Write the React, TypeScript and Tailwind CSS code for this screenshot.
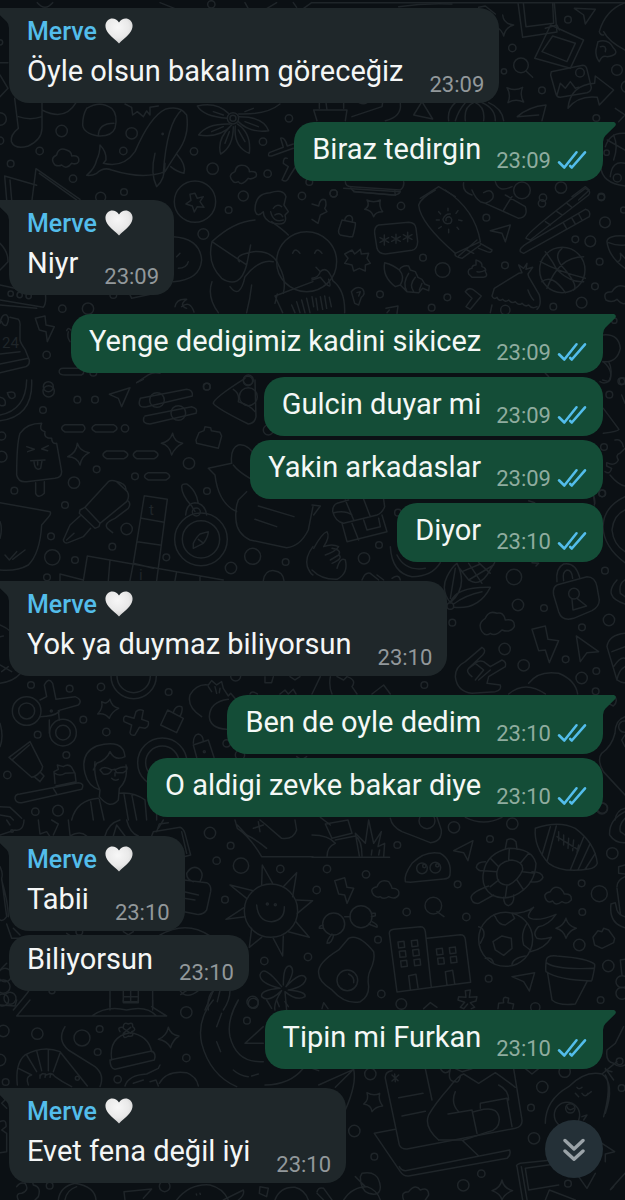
import { useId } from 'react'

type Message = { text: string; time: string }
type Group = { from: 'me' | 'Merve'; messages: Message[] }

const groups: Group[] = [
  { from: 'Merve', messages: [{ text: 'Öyle olsun bakalım göreceğiz', time: '23:09' }] },
  { from: 'me', messages: [{ text: 'Biraz tedirgin', time: '23:09' }] },
  { from: 'Merve', messages: [{ text: 'Niyr', time: '23:09' }] },
  {
    from: 'me',
    messages: [
      { text: 'Yenge dedigimiz kadini sikicez', time: '23:09' },
      { text: 'Gulcin duyar mi', time: '23:09' },
      { text: 'Yakin arkadaslar', time: '23:09' },
      { text: 'Diyor', time: '23:10' },
    ],
  },
  { from: 'Merve', messages: [{ text: 'Yok ya duymaz biliyorsun', time: '23:10' }] },
  {
    from: 'me',
    messages: [
      { text: 'Ben de oyle dedim', time: '23:10' },
      { text: 'O aldigi zevke bakar diye', time: '23:10' },
    ],
  },
  {
    from: 'Merve',
    messages: [
      { text: 'Tabii', time: '23:10' },
      { text: 'Biliyorsun', time: '23:10' },
    ],
  },
  { from: 'me', messages: [{ text: 'Tipin mi Furkan', time: '23:10' }] },
  { from: 'Merve', messages: [{ text: 'Evet fena değil iyi', time: '23:10' }] },
]

type Tile = { x: number; y: number; dots: number[][]; paths: string[] }

// Doodles are drawn at 3x and scaled down; dots are [cx, cy, r].
const tiles: Tile[] = [
  {
    x: 0,
    y: 0,
    dots: [
      [185, 393, 17], [395, 400, 17], [119, 453, 11], [370, 453, 11], [32, 491, 10], [219, 536, 11],
      [582, 454, 11], [638, 506, 17], [789, 425, 11], [803, 521, 11], [372, 576, 10], [867, 355, 11],
      [0, 357, 19], [0, 422, 11], [0, 127, 8], [634, 13, 11], [488, 402, 2], [302, 592, 15], [730, 588, 15], [906, 588, 11],
      [699, 355, 17], [699, 355, 9], [585, 605, 62], [928, 546, 10],
    ],
    paths: [
      'M112 8Q135 35 158 8M480 8L525 26M735 8L745 26M800 26L830 8M880 8L890 22M910 26L935 8',
      'M0 188H24M0 225L24 265L0 290',
      'M44 295L55 385Q30 405 34 425Q45 450 85 438Q125 420 126 385V305M55 350Q90 362 126 350M126 330Q195 365 228 308',
      'M260 325Q300 300 335 325Q355 345 345 385Q335 410 295 408Q250 400 248 375Q248 345 260 325M295 408Q295 370 342 370',
      'M375 312L395 322L398 345L412 335L430 350L440 333L450 345L450 322L475 318',
      'M310 490Q370 505 405 455Q450 350 495 328Q540 315 560 345Q570 410 530 460Q510 490 495 515Q430 540 335 510Q310 500 290 520Q275 528 260 526Q285 505 290 480Q300 460 300 435Q320 455 318 480Q310 490 310 490M545 330Q500 370 490 520M465 460Q450 520 470 560Q495 540 495 490M530 462Q560 495 552 520Q530 515 512 500',
      'M165 495Q148 475 170 465Q175 440 200 450Q215 455 215 468Q240 465 236 485Q230 495 215 490Q200 510 185 495Q175 500 165 495',
      'M700 545Q680 525 705 515Q710 490 735 497Q750 505 748 515Q775 512 768 530Q755 540 745 535Q725 560 715 545Q705 550 700 545',
      'M685 340Q650 305 592 318Q610 350 682 355M690 372Q620 370 596 405Q660 415 695 375M690 380Q650 420 662 462Q700 440 700 380M706 378Q700 440 748 460Q755 400 712 372M715 365Q750 400 806 392Q790 350 718 350M716 342Q800 345 840 312M640 335L670 345M635 395L670 380M675 430L688 395M735 425L715 390M775 380L735 365M760 325L735 335',
      'M808 458Q800 470 815 468L880 445M808 458L850 442L842 415Q855 410 862 438L880 432M862 475Q850 470 850 490L865 500L846 540Q860 550 868 530L890 495',
      'M14 528L110 556M14 528L20 600M30 540L35 600M108 506L96 600M108 506L240 598M118 520L230 600',
      'M585 580L592 595L610 590L600 605L612 622L592 620L583 636L577 618L558 612L573 601L570 583Z',
    ],
  },
  {
    x: 312,
    y: 0,
    dots: [
      [768, 59, 10], [601, 144, 11], [576, 214, 8], [627, 196, 22], [690, 271, 10], [915, 210, 16], [853, 354, 10],
      [804, 218, 13], [65, 580, 11], [690, 610, 11], [747, 563, 17], [868, 592, 10], [630, 571, 25], [884, 458, 8], [916, 534, 12], [945, 260, 17],
    ],
    paths: [
      'M0 8H939',
      'M260 20Q340 8 420 12M500 22L520 18L550 42',
      'M572 45Q575 72 605 75Q580 82 575 108Q570 90 555 82',
      'M618 8L632 112L735 96L727 8M634 8L642 80L725 70L722 8',
      'M716 75L815 120L775 205L668 175ZM722 108L790 130L765 185L690 155ZM700 85L735 75L742 90',
      'M787 25L850 28L820 72L815 45ZM862 95Q880 30 939 8M875 95Q890 125 939 150M862 95Q865 105 875 105',
      'M858 125Q890 115 905 145Q925 165 885 170Q870 165 862 185Q850 170 852 150ZM865 140Q885 135 880 155',
      'M642 213L662 232',
      'M718 215L812 196Q822 196 825 208L838 262Q838 275 825 278L745 292Q735 292 732 282L716 225ZM735 285L745 250L760 265L775 245L790 265L800 262',
      'M768 325Q775 255 848 250L850 228L905 270L862 315L856 292Q800 285 768 325',
      'M585 263Q610 275 632 262Q622 285 635 306Q610 295 588 308Q598 285 585 263Z',
      'M5 330H105L100 362M15 362L5 330M22 308V325M42 308L45 330M95 308L95 325M120 350L210 320L212 308M265 310Q270 350 220 362M305 345L330 305L362 357ZM130 300Q150 318 165 308',
      'M410 362Q405 330 430 308M430 362Q440 330 460 308M460 362Q455 320 485 308M490 308Q520 320 515 362M510 308Q550 325 550 362M530 308Q570 325 575 362M616 350Q650 320 702 315L690 362M616 350L680 345M910 325L939 345L920 365',
      'M100 545Q100 560 120 560L265 570Q278 560 275 545M115 560Q120 575 135 575L250 586L248 570M325 595L380 560L430 590M455 548Q450 575 480 585M550 545Q560 580 600 560',
      'M880 440Q895 395 939 400M866 500Q870 550 939 558M886 420L939 450M895 530Q900 480 939 490M905 405Q920 440 905 480',
      'M780 590L820 560L832 570L800 600',
    ],
  },
  {
    x: 0,
    y: 190,
    dots: [
      [686, 60, 10], [610, 132, 16], [187, 356, 11], [264, 356, 17], [140, 495, 11], [32, 311, 8], [59, 315, 8], [86, 318, 8],
      [340, 315, 10], [744, 573, 14], [620, 590, 10], [280, 548, 10], [145, 590, 15], [920, 215, 90],
    ],
    paths: [
      'M765 60Q765 10 810 8Q850 -5 858 20L852 45L865 65L855 75Q865 110 820 100Q790 90 790 65Q770 85 765 60M820 55Q830 40 845 50M812 65Q820 100 850 90M825 75Q840 65 848 80',
      'M765 90Q700 95 636 155L740 225M815 95Q850 120 865 135M636 155Q620 220 665 265Q720 300 740 225L752 165M718 215Q700 195 760 185Q820 180 838 230Q860 270 850 310M636 275Q620 320 655 368M690 290Q720 330 735 260Q780 205 820 215M755 285Q750 330 740 368',
      'M825 318L939 275M825 318L848 368M832 312L825 340M875 345L885 368M890 335L900 368M905 330L915 368M920 325L930 368M878 190Q885 170 900 190',
      'M520 140Q600 145 605 210Q600 270 520 275M530 200L540 190M535 235Q560 235 565 215M525 350Q530 325 560 328Q535 345 560 355M545 350Q570 330 582 366M388 310L395 325L455 312',
      'M0 160Q25 185 24 215Q10 230 0 240M0 285L45 295M0 330L130 352Q140 340 136 310M0 345L110 355',
      'M0 400Q5 370 20 375Q30 385 20 405Q10 410 5 395M30 382L55 388Q62 395 60 410V450Q62 460 75 478L88 510Q90 530 70 532L0 548M0 492L60 485M0 522L85 505',
      'M106 385L135 378L138 405L163 410L142 455L138 425L118 420Z',
      'M200 422Q205 410 212 420M205 425Q200 440 210 455M178 548Q175 535 190 535H240Q260 545 245 555H195Q180 555 178 548M410 578L445 555Q460 545 480 550',
    ],
  },
  {
    x: 312,
    y: 190,
    dots: [
      [65, 10, 11], [267, 48, 11], [333, 203, 10], [392, 240, 22], [523, 83, 10], [406, 322, 10], [204, 313, 10],
      [359, 353, 10], [579, 226, 10], [693, 23, 11], [868, 20, 10], [879, 97, 16], [790, 148, 10], [835, 154, 16],
      [863, 215, 10], [849, 289, 10], [809, 338, 16], [724, 350, 10], [932, 573, 10], [907, 392, 8], [751, 240, 68], [580, 360, 14], [935, 60, 9],
    ],
    paths: [
      'M0 265Q20 262 25 245L12 232M25 245Q45 225 62 270M0 270L25 262L40 280Q62 300 50 268M8 190Q15 170 30 190M62 272Q100 300 98 368M0 320L5 350M12 325L17 360M25 320L32 358M38 318L44 355M52 322L58 350',
      'M95 -5L265 5Q260 15 245 15L125 5M0 42L20 48Q25 22 40 30Q45 45 38 55L45 65L25 75L18 100L0 88M165 30Q185 40 205 30Q200 50 212 65Q190 65 185 80Q178 60 158 58Q175 48 165 30',
      'M90 90L130 98Q132 105 122 140Q115 142 85 135Q78 130 80 120ZM98 92Q100 75 115 77Q125 82 120 97',
      'M200 105L290 97Q310 98 312 115L317 155Q316 178 300 181L220 192Q200 192 195 175L188 130Q186 110 200 105Z',
      'M217 135V165M204 143L230 157M230 143L204 157M252 133V160M239 140L265 154M265 140L239 154M287 127V155M274 134L300 148M300 134L274 148',
      'M370 0Q325 25 320 45Q325 100 430 190L505 155Q490 60 400 0M430 190Q425 200 450 205L505 165M440 198L495 150M465 180L485 190M505 160L540 180Q540 190 525 185L500 175',
      'M402 92Q400 80 412 80Q425 88 415 100Q395 105 393 88Q400 70 415 72M408 55V62M380 65L386 72M438 62L432 70M373 90H382M440 90L450 92M380 115L388 110M410 118V128M435 112L440 118',
      'M480 0Q490 25 505 35L520 40Q550 30 542 10Q535 -5 515 8M520 40L620 85Q650 80 640 50L580 15M575 60Q590 35 600 20M535 122L595 105L580 155L570 130Z',
      'M642 145Q640 130 820 -5Q840 5 830 15L655 150ZM625 185Q620 175 645 160L820 58Q838 62 832 80L635 190ZM700 95L715 105M735 65L750 75M765 40L780 52M755 100L765 118M780 85L790 102M800 72L810 90',
      'M120 180L128 192L145 178L148 192L170 190L165 205L175 220L160 225L160 243L142 235L125 243L120 225L98 220L108 205L98 192Z',
      'M218 218Q210 260 250 290L265 285L285 305L320 308L332 295L350 302L352 288L338 282L330 268L318 262L310 245L295 240L290 228Q270 225 262 240Q245 225 218 218M262 240Q280 260 265 285M290 250Q270 280 285 305M310 262Q290 285 305 305M330 280L322 300',
      'M470 252Q465 238 480 235Q480 225 492 225V210Q512 215 510 230Q525 235 520 245Q530 260 515 262H480ZM495 245Q510 248 520 240',
      'M118 305Q135 285 152 297Q162 312 148 322L140 345L128 340ZM135 308L145 305L140 318M460 305Q470 290 485 300L508 318L475 358L462 350L480 325ZM222 355L258 348L255 370M225 368L232 360',
      'M540 318L547 295L620 250L630 248L620 225L635 235L645 220L642 238L662 232L648 252L650 260L682 315Q690 345 675 358M540 318Q545 330 555 322Q560 335 572 328Q580 338 590 330Q600 342 610 335Q620 348 630 340Q640 352 650 345Q660 358 675 350M540 345L535 368M648 300Q655 320 665 330',
      'M700 185Q720 210 735 240Q780 280 815 275M685 215Q740 245 820 265M750 175Q720 200 760 240Q800 290 785 300M815 200Q740 200 705 295M690 275Q720 250 760 308',
      'M885 155Q885 135 939 138M885 155Q890 200 939 235M890 158Q915 168 939 165M915 215Q930 215 925 190L939 205',
      'M882 330Q870 305 900 305Q915 280 939 290M882 330Q900 340 915 328Q930 345 939 340M872 435Q920 430 925 475Q915 520 872 515M890 515Q905 545 890 575L872 570M700 550L710 560',
    ],
  },
  {
    x: 0,
    y: 380,
    dots: [
      [146, 34, 17], [232, 59, 10], [285, 59, 10], [129, 90, 10], [375, 145, 11], [5, 168, 12], [5, 230, 16], [290, 268, 10],
      [222, 308, 17], [43, 332, 10], [195, 375, 10], [153, 469, 10], [380, 447, 17], [157, 532, 23], [225, 540, 10],
      [337, 500, 10], [405, 289, 10], [567, 250, 17], [621, 333, 10], [621, 20, 10], [499, 532, 10], [693, 564, 17],
      [758, 529, 24], [857, 546, 10], [471, 60, 22], [535, 99, 22], [603, 478, 79], [603, 478, 56], [589, 396, 12], [141, 592, 10], [745, 50, 27], [745, 0, 15], [805, 150, 15],
    ],
    paths: [
      'M95 0Q100 110 0 122M80 0Q78 90 0 105M22 38Q48 30 45 50Q30 65 22 38M0 52Q20 55 15 75Q5 80 0 75M410 8L430 -2',
      'M328 43L390 23L365 80L355 55ZM421 55L560 28Q580 30 577 48L440 80Q415 85 418 65ZM435 108L575 80Q595 85 588 100L450 132Q425 132 432 112',
      'M640 70Q640 55 735 -5M640 70Q650 85 745 132Q765 130 768 110L765 0M700 28Q720 40 715 65Q750 75 765 95',
      'M195 134H248Q262 145 248 156H195Q175 145 195 134M287 134H340Q362 145 340 156H287Q265 145 287 134M320 213H372Q395 224 372 236H320Q298 224 320 213M410 213H463Q485 224 463 236H410Q390 224 410 213M445 278H498Q520 289 498 300H445Q422 289 445 278',
      'M50 285Q50 190 60 160Q80 130 125 130Q115 150 135 155Q130 175 155 175Q155 192 170 190L185 275Q185 292 165 295L80 305Q55 308 50 285M107 308V340Q115 358 133 340V305M80 200L103 208L83 215M145 197L125 207L143 212M92 242L135 240M102 245Q105 275 122 265L126 242M113 243V255',
      'M232 190Q240 215 268 218Q245 228 240 255Q232 230 203 230Q230 218 232 190M518 160Q522 185 548 190Q525 200 515 225Q508 195 484 190Q510 185 518 160',
      'M597 158L612 152L615 140L632 143L634 152L660 157L665 168L655 205L590 190L588 180Z',
      'M625 265L695 250M625 265L645 285Q655 370 710 395M695 250Q690 205 715 195Q745 190 770 235M700 255Q715 275 750 295M740 335L715 360Q705 385 708 420Q710 460 750 480L860 503Q900 500 925 450L939 380M775 378L882 410M765 418L830 440',
      'M255 382L325 305Q335 298 350 305L382 335Q390 350 380 365L300 430M255 382L300 430M255 382L240 390L238 400L285 445L297 440L300 430M240 408L210 435L190 480Q192 492 205 488L250 470L272 445M200 480L222 460M345 303Q380 310 378 330M382 360Q395 370 385 385L345 415Q310 430 322 445L338 458',
      'M0 368L150 395Q155 402 145 412L125 435Q120 520 85 555Q50 575 0 570M0 425Q8 445 0 475M15 525L28 540L50 515M38 538L75 510',
      'M433 347L502 358L470 602M433 347L400 550L390 602M425 415L492 427M412 485L480 495M262 528L670 600M262 528L250 602M330 540L325 602M180 582L250 600M180 582V602M400 550L460 565M530 575L525 602M600 588V602',
      'M545 320Q545 310 560 312Q580 325 590 350L595 370M545 320Q545 345 575 378L585 395M557 405Q560 370 585 368Q615 370 620 405M580 490Q590 470 600 462L625 455Q625 470 610 490L580 505ZM595 478L608 488',
      'M790 602Q795 570 822 572Q850 575 852 602M939 500Q915 530 922 560Q930 580 939 585',
    ],
  },
  {
    x: 312,
    y: 480,
    dots: [
      [156, 235, 17], [201, 195, 10], [606, 291, 23], [618, 375, 17], [696, 384, 10], [421, 428, 10], [578, 507, 17],
      [635, 556, 17], [761, 538, 10], [810, 442, 10], [891, 420, 17], [879, 272, 10], [870, 40, 10], [809, 594, 17],
      [853, 573, 10], [851, 634, 10], [337, 615, 10], [786, 341, 16], [415, 378, 10], [258, 98, 10],
    ],
    paths: [
      'M62 95Q62 75 75 70L110 60M215 58L218 80Q210 100 195 105L95 130Q70 125 62 95M100 60L125 120M155 58L175 110M65 98Q100 90 120 105M90 130L105 185L225 155L210 105M120 130L140 180M155 120L165 150L205 140L200 115M0 75L25 78L5 105',
      'M5 205Q30 160 45 155Q55 170 35 200Q60 190 80 200Q70 215 40 225M60 205Q90 210 80 225L55 240M80 225Q95 235 60 250M75 265Q85 230 100 240Q110 280 75 298Q30 300 0 270',
      'M235 200Q240 280 300 290Q360 290 385 248M255 225Q280 275 340 265M150 300Q160 275 175 280L200 300M195 285L215 300M240 295Q260 280 265 300',
      'M415 368Q385 330 405 290Q420 260 435 250Q470 320 415 368M415 368Q430 320 535 322Q500 390 425 382M425 372Q460 345 510 335M440 262L470 300Q500 320 525 285L548 248M470 250L510 310M500 248L535 280M450 275L505 252M470 300L545 255M415 355L430 265M650 62L668 68M845 50L848 70M660 248L680 250L672 258',
      'M725 345Q720 315 745 312L825 290Q850 290 855 320L862 360Q862 380 840 392L785 415Q750 425 740 395ZM735 305Q730 265 755 252Q790 245 803 292M755 302Q750 275 765 270Q780 270 782 295M780 357L783 390L824 378L795 355',
      'M510 455Q495 430 520 415Q530 390 555 400Q575 395 580 420Q610 415 607 440Q595 460 570 450Q550 470 535 460Q520 470 510 455',
      'M660 448L700 438L708 478L740 482L712 548L700 510L680 512ZM793 468L860 515L825 518L805 545Z',
      'M430 590Q430 560 460 545L510 502Q525 510 512 525L470 565L490 550Q500 540 515 545L535 560L570 540Q585 545 580 560L530 590L525 610L565 615Q570 630 550 635L480 640Q435 635 430 590M470 565Q460 575 480 590M490 550L515 570L490 600M500 600L535 570',
      'M590 642Q640 600 700 642M650 610Q680 570 740 580Q790 600 797 642M885 500Q890 465 939 460M885 500L915 600Q930 610 939 608M900 515L939 500M905 560Q925 530 939 535M915 600Q920 570 939 560',
      'M939 50Q875 80 873 140Q875 200 939 248M939 90Q905 105 900 150Q905 195 939 215M939 300Q920 310 925 340L939 350M915 300Q870 350 939 372M0 642L25 590M55 590Q50 620 60 642M75 590L95 600L105 590Q135 600 120 620L135 642M180 642L215 615L235 642',
    ],
  },
  {
    x: 0,
    y: 570,
    dots: [
      [93, 345, 10], [209, 356, 10], [303, 351, 11], [506, 366, 10], [250, 449, 10], [113, 494, 10], [319, 486, 11],
      [199, 555, 10], [22, 615, 11], [106, 725, 11], [174, 722, 16], [80, 423, 43], [80, 423, 24], [189, 488, 40],
      [189, 488, 22], [401, 318, 68], [401, 318, 50], [487, 578, 74], [487, 578, 50], [707, 318, 15], [613, 545, 3], [680, 520, 11], [720, 555, 14], [154, 423, 3],
    ],
    paths: [
      'M0 165Q40 180 60 225M0 340Q40 335 62 310M0 285L35 305M5 305L25 290M0 460Q12 500 0 530M0 200L10 198',
      'M120 390L140 380L133 345Q145 320 158 340L168 388L225 380Q250 390 235 405L175 422L178 450M120 440Q160 440 178 425M148 450V490',
      'M330 388Q335 410 356 415Q335 425 328 445Q315 428 293 432Q310 415 305 395Q320 405 330 388M408 425Q418 415 430 422L425 448L445 455Q448 470 435 475L418 472L405 495Q392 498 390 488L395 465L372 455Q368 440 378 438L402 445Z',
      'M503 420L550 445L530 488L482 465ZM520 428Q525 405 545 410Q550 420 540 440M605 440Q560 410 570 375Q590 340 625 345L635 332L650 345L665 335L670 355L685 378L692 370L705 385M628 440Q630 395 685 388M628 440Q630 475 680 478M625 350L635 365M645 350L650 370M660 355L658 368M750 372Q755 360 772 372M840 372L855 360L865 372L880 358L888 372M795 320V338H815L820 320M870 320L885 330L900 320',
      'M27 562L90 515M27 562L95 622Q110 620 125 600L128 590L90 515M38 568L88 525M105 622L120 635L132 618L122 608M165 640L162 605L175 598L172 585L190 590Q205 580 215 592L225 610L228 635L168 648M165 610Q180 620 195 610L222 608M45 685Q45 672 60 672L235 638Q255 640 245 658L65 698Q48 700 45 685M160 655L170 672',
      'M255 610Q240 550 290 528Q370 505 375 560Q345 575 330 545Q320 570 290 580L280 600M285 575Q280 620 300 660L298 680Q330 720 355 690L358 655Q385 630 378 585M300 600Q310 585 335 600Q330 615 310 612ZM345 600Q360 590 380 590Q385 600 370 608H350ZM335 600L345 598M335 625Q345 635 355 628M300 660Q265 650 255 610M295 685Q230 690 215 750M272 695L280 750M298 688L312 750M358 670Q400 665 435 690L440 750M372 672L385 750M395 672L410 750M345 608V618',
      'M580 520Q580 495 595 492Q610 495 610 515M580 525L625 510L642 562M580 525L590 562M0 710L30 712Q45 725 65 745M0 735L30 740L40 750M445 690L470 720V750M890 560L905 570L920 560',
    ],
  },
  {
    x: 0,
    y: 820,
    dots: [
      [630, 39, 17], [692, 77, 10], [650, 122, 11], [723, 137, 23], [841, 147, 11], [675, 239, 10], [793, 423, 11],
      [924, 411, 11], [758, 546, 17], [813, 272, 80], [802, 252, 3], [826, 254, 3], [36, 33, 4], [15, 465, 20], [10, 500, 20], [30, 535, 18], [8, 540, 18], [238, 335, 10], [156, 512, 9],
    ],
    paths: [
      'M770 255Q775 305 815 305Q855 300 853 260M785 195L787 135L818 190M850 200L890 158L878 230M890 240L938 242L892 280M888 305L928 352L865 335M850 348L848 408L820 355M785 352L748 382L755 325M735 290L678 298L733 262M740 235L690 195L760 212',
      'M705 0L712 25Q750 50 785 110H939M712 15L740 45Q770 60 800 85M780 0L795 12L845 55Q880 60 890 30L885 0M760 25L790 15M775 5L780 35M580 185Q560 180 560 160Q575 135 595 145Q615 160 600 185M552 180L620 188Q635 195 632 215L620 270Q610 285 590 283L552 275M552 215L595 225M552 235L585 240M455 48L460 35L540 22Q550 25 555 40L572 105L552 110M470 35L478 12L505 8M545 35L560 100',
      'M0 140Q10 160 5 175L20 290Q10 305 0 300M5 180Q25 250 25 290M20 312L35 355H75M40 325L60 345M105 450Q110 490 65 540L40 570M0 450L20 430M0 45L45 30Q70 35 72 0M20 0L30 15M115 0L120 42L140 35L150 50M155 0L175 12L160 45M315 48Q325 10 360 0M340 48L350 15L375 48M380 0Q390 40 415 48M205 0L210 45M210 48Q240 30 260 48M490 0L475 25M480 345Q560 300 630 348M640 512Q620 530 625 570M560 512Q530 530 550 520',
      'M330 512V570M458 512V570M370 512V545H415V512M370 530H415M392 512V545M540 512Q560 540 595 512',
      'M845 500Q790 430 780 465Q780 490 840 505Q780 510 785 530Q805 550 845 512Q820 550 825 570M850 495Q850 435 870 438Q890 450 858 500Q905 450 918 475Q915 500 865 510Q920 515 915 530Q890 545 855 515L860 570M200 340L215 350M370 335L385 345L400 335',
      'M690 512Q690 540 670 570M640 512L615 570M660 512L652 545',
    ],
  },
  {
    x: 312,
    y: 800,
    dots: [
      [426, 82, 17], [601, 71, 17], [534, 117, 10], [256, 135, 10], [45, 207, 11], [162, 223, 11], [14, 270, 11],
      [437, 253, 10], [284, 336, 11], [463, 351, 11], [198, 419, 10], [208, 582, 11], [530, 536, 10], [802, 435, 17],
      [889, 498, 17], [866, 600, 10], [809, 250, 10], [862, 281, 24], [811, 336, 10], [901, 160, 17], [364, 317, 25],
      [65, 372, 33], [147, 350, 33], [330, 205, 16], [370, 203, 16], [337, 198, 5], [376, 196, 5], [106, 541, 31], [581, 418, 81], [930, 545, 18], [930, 580, 18], [870, 25, 17], [268, 612, 16], [670, 622, 14], [345, 62, 24],
    ],
    paths: [
      'M0 172H233M0 105Q50 105 70 130Q45 140 45 170M40 72L60 115L120 100L108 60ZM70 120L130 108Q150 120 150 168M25 52L55 75M142 168L130 100L160 130L170 60L185 130L208 95L198 140L218 130L215 170M178 165L180 150M200 165L203 150',
      'M235 55Q240 80 270 95Q310 110 355 128Q390 125 388 90L375 52M460 52Q515 80 570 52M425 152L483 122L468 182L455 158ZM280 245Q275 225 300 190Q340 150 385 160Q420 180 414 225Q412 236 395 237L295 247Z',
      'M68 242L98 233L105 262L125 265L105 310L98 285L80 282ZM185 285Q170 265 195 260Q205 235 230 245Q240 260 240 265Q265 265 260 285Q250 300 230 290Q215 300 205 290Q195 295 185 285M375 335L396 350M703 300Q690 280 715 275Q725 255 745 265Q755 275 757 282Q780 280 778 300Q765 315 750 305Q730 320 722 303Q710 310 703 300',
      'M98 350H115M33 375Q20 378 22 385L35 385M60 402Q45 420 45 430Q60 430 65 405M178 340H190V347L178 350M170 372L195 382Q200 375 180 365',
      'M20 520Q15 490 80 450L110 415Q140 400 185 455Q190 480 175 510Q165 530 170 560Q170 590 145 605Q100 615 60 570Q20 545 20 520M110 522Q128 530 125 548',
      'M255 576L232 400Q232 390 245 388L325 380Q338 380 340 395L358 562M345 415L445 404Q458 404 460 418L476 547M255 576L476 547M290 527L295 568M290 527L312 523L318 563M400 515L405 555M400 515L422 511L428 550',
      'M258 426L276 424L278 442L260 444ZM298 422L316 420L318 438L300 440ZM262 454L280 452L282 470L264 472ZM302 450L320 448L322 466L304 468ZM266 483L284 481L286 499L268 501ZM306 479L324 477L326 495L308 497ZM373 447L391 445L393 463L375 465ZM412 443L430 441L432 459L414 461ZM377 475L395 473L397 491L379 493ZM415 471L433 469L435 487L417 489Z',
      'M670 85Q740 60 790 85Q850 130 856 190Q850 205 830 207Q750 220 710 190Q665 140 670 85M715 80L690 165M733 78L705 185M815 112L775 210M835 130L798 210M850 160L820 207M735 110L800 150M740 95V122M755 105V135M770 115L768 145M785 120L782 152M800 135L795 158',
      'M515 215Q525 160 590 145Q660 145 672 190Q670 250 620 280Q580 305 540 285Q505 260 515 215M555 215Q560 185 600 180Q635 185 632 210Q620 240 590 255Q550 255 555 215M560 200L535 175M590 182L592 148M625 190L650 160M632 215L668 220M615 240L635 270M585 257L580 292M560 240L535 260M555 215L515 212M580 145L585 120Q600 110 612 125L615 148M520 185Q495 185 493 202Q500 215 515 212M660 215Q690 215 693 232Q685 250 655 245M575 292Q575 315 590 317Q608 310 605 285M530 258Q480 275 477 292Q480 312 500 310L545 285',
      'M570 408L598 415L600 445L575 466L550 450L543 425ZM550 350Q560 375 580 375L608 355M600 340L608 355M545 345L550 350M645 370Q625 400 635 435L655 450M500 380Q520 385 515 410L505 430M520 475Q540 470 545 490M600 495Q600 475 640 468M600 340Q640 340 665 322Q640 350 655 355Q680 365 732 343Q710 375 680 380Q660 400 675 415Q690 420 718 412Q700 445 655 455',
      'M762 355Q768 378 793 385Q770 392 762 415Q755 390 732 385Q755 378 762 355M843 412L858 392L870 395L875 385L890 390L908 415L905 428L870 445L848 435ZM703 480Q705 465 735 468Q830 475 848 493Q850 500 840 540M703 480Q700 505 702 515Q740 540 838 543M703 488Q730 510 845 505M707 520L720 600Q740 618 790 612L825 545',
      'M600 530L668 518L652 573L635 545ZM460 572L475 570L472 592L495 590L492 603L475 608L488 622L478 626M460 572L462 592L440 590L438 600L458 607L445 622L455 626L467 612M558 626L560 610L575 608Q572 592 580 592L590 595L588 608L605 612L602 626M30 626L35 608L48 626M335 626L355 608L375 622',
      'M939 35Q890 60 893 105Q910 130 939 128M939 55Q920 75 925 95L939 105M920 200L939 195M920 200V220L939 222M915 260Q915 240 939 230M915 265L925 340M897 312L910 308L915 330Q920 345 939 350M897 312Q890 370 939 383M925 480L939 478M925 480L930 525',
    ],
  },
  {
    x: 0,
    y: 1000,
    dots: [
      [559, 37, 17], [741, 62, 10], [112, 101, 17], [246, 114, 24], [299, 87, 10], [293, 156, 10], [559, 174, 11],
      [353, 238, 11], [17, 246, 10], [10, 93, 17], [0, 180, 17], [494, 559, 16], [149, 557, 10], [232, 235, 6], [760, 10, 15],
    ],
    paths: [
      'M50 48H500L455 20M50 48L90 0M275 48Q320 15 380 30Q440 15 470 48M330 0V20M458 0V20M370 0V8H415V0M0 15L45 18L50 0',
      'M335 180Q325 110 390 98Q445 105 455 155M330 180L455 153Q470 160 463 180L345 208Q330 205 330 180M360 95Q350 80 370 82Q370 65 385 72Q400 65 398 80Q412 90 395 95Q405 112 385 108Q370 120 370 102M370 85L392 100M392 82L370 100',
      'M505 82Q512 105 537 108Q518 120 512 143Q500 122 475 118Q500 108 505 82M195 80Q170 120 205 150L285 200Q315 225 300 260M52 255Q45 190 75 165Q130 135 180 155L262 258M85 255Q75 230 95 225L55 205M80 165L110 215M110 152L125 212M145 150L145 212M180 160L160 215M120 230Q125 215 140 225Q155 215 165 230Q185 245 215 260M120 235V225M135 232L137 222M150 232L152 222',
      'M640 0Q590 60 605 130Q630 225 710 260M715 0Q680 60 690 110Q710 190 790 185M665 40L650 80M650 125L662 155M700 210Q720 228 745 230M755 228L775 222M735 130L790 80M735 130H790M375 258Q385 225 440 222L475 205L480 195M400 250L430 240M450 245L468 240L475 258M478 250Q500 210 560 218Q590 230 595 258M800 0L815 25M830 0L838 20M855 5L865 20M795 255Q870 255 910 205',
      'M0 270L15 300L5 310L20 325M0 365Q20 355 18 380L5 390L20 400L20 455L0 458M50 560Q60 545 75 550Q90 570 65 580Q45 580 55 600M75 545Q100 540 100 555Q125 560 115 590L105 600M175 600Q180 560 225 550Q285 560 288 600M195 600Q200 570 230 560M372 575L455 567L430 595M372 575L375 600M530 600Q570 550 630 555Q670 565 685 600M670 600L730 570Q735 585 715 600M780 560L805 565L800 590L778 580ZM825 600Q840 560 885 562Q915 570 925 600M589 582L590 585M600 580L601 583',
    ],
  },
  {
    x: 312,
    y: 1000,
    dots: [
      [175, 222, 17], [127, 393, 17], [187, 470, 10], [508, 521, 11], [454, 556, 17], [666, 415, 17], [657, 323, 10],
      [691, 261, 17], [758, 215, 17], [929, 264, 10], [768, 551, 10], [923, 184, 10], [765, 345, 38], [775, 325, 14],
    ],
    paths: [
      'M165 278Q185 290 203 280Q198 300 212 318Q190 320 180 335Q178 315 155 312Q172 300 165 278M20 255L125 208Q135 250 100 330M70 262L120 212M0 205L20 212',
      'M240 212Q218 215 220 235L262 435Q268 448 285 447L610 385Q632 380 630 360L605 206M340 206L360 300M260 293L333 280M270 348L340 334M240 225L258 242M260 225L240 243M248 222L250 245',
      'M380 420Q335 380 350 345Q370 310 410 265Q440 225 455 222L500 250L550 218Q595 250 610 262M430 275Q415 310 440 335M408 342L480 330L495 400M485 335L515 328Q560 320 562 360Q560 390 530 395M505 325V310L585 295L600 380M560 255Q590 270 590 300M385 206Q400 230 415 208Q405 245 430 245Q440 250 445 230M430 206L450 215L480 206M640 206L660 222L680 206',
      'M187 400L250 388M187 400L265 515Q275 530 290 528L585 475Q598 465 593 450L280 512Q268 512 262 500M380 420L450 420L500 468M455 420L530 395',
      'M700 370Q700 300 770 260Q820 210 870 222Q910 250 880 340M880 225Q900 260 875 350M795 262Q800 270 810 262M810 280Q820 295 828 280M790 280L800 290M825 285L838 275M765 320Q770 335 785 325M810 350L825 345L815 360M870 222L915 185M880 210L900 215M880 205L905 240',
      'M935 80L910 130L885 150Q880 185 905 190M905 190Q920 205 939 195M870 430L908 455L880 462V485M905 560Q875 590 939 520M800 530L825 565L850 520',
      'M615 500Q610 495 625 490L720 480M615 500L632 600M640 505L730 492M640 505L650 570L740 555M628 500L645 598M700 600L712 570L790 600M150 520Q200 510 205 560Q205 590 170 580Q145 570 145 530ZM95 600Q120 560 165 560Q195 570 205 600M130 530L160 560M15 575Q20 560 35 565L60 600M15 580L35 600M275 600Q265 575 290 575Q310 550 325 570Q350 560 350 585L340 600M570 540Q575 565 602 572Q578 580 570 600Q565 580 540 572Q565 565 570 540',
    ],
  },
  {
    x: 565,
    y: 360,
    dots: [
      [133, 104, 10], [169, 64, 10], [117, 261, 10], [112, 400, 10], [178, 1100, 17], [112, 1345, 15],
    ],
    paths: [
      'M115 5Q145 30 135 60Q120 75 105 65M115 145L162 208Q160 215 115 220M150 240Q170 235 175 260M120 335Q135 345 140 325L125 318L125 308Q150 320 160 300Q150 285 165 280L180 265M135 345Q160 375 180 378M85 405Q92 420 88 435M170 105L180 130',
      'M150 1010Q160 1025 145 1038L130 1030M180 1070Q150 1080 150 1120Q140 1160 110 1180Q95 1200 115 1235L180 1305M180 1125L170 1140L180 1160M150 1380Q155 1350 180 1345',
    ],
  },
]

function Wallpaper() {
  return (
    <svg
      className="absolute inset-0 h-full w-full"
      viewBox="0 0 625 1200"
      preserveAspectRatio="xMidYMin slice"
      aria-hidden="true"
    >
      {tiles.map((tile) => (
        <g
          key={`${tile.x}-${tile.y}`}
          transform={`translate(${tile.x} ${tile.y}) scale(0.3333)`}
          fill="none"
          stroke="#1f2529"
          strokeWidth="4.5"
          strokeLinecap="round"
          strokeLinejoin="round"
        >
          {tile.dots.map(([cx, cy, r], i) => (
            <circle key={i} cx={cx} cy={cy} r={r} />
          ))}
          {tile.paths.map((d) => (
            <path key={d} d={d} />
          ))}
        </g>
      ))}
      <g fill="#1f2529" fontFamily="Roboto, sans-serif" fontSize="15">
        <text x="2" y="348">24</text>
        <text x="149" y="515">t</text>
        <text x="139" y="580">i</text>
      </g>
    </svg>
  )
}

function WhiteHeart() {
  const id = useId()
  return (
    <svg className="mb-0.5 h-[26px] w-7" viewBox="0 0 28 26" role="img" aria-label="white heart">
      <defs>
        <radialGradient id={id} cx="0.45" cy="0.35" r="0.7">
          <stop offset="0" stopColor="#f7f7f7" />
          <stop offset="0.6" stopColor="#e9e9e9" />
          <stop offset="1" stopColor="#c9c9c9" />
        </radialGradient>
      </defs>
      <path
        d="M14 25.4C11.5 22.6 7 19.6 3.8 15.8C-.4 11 -.6 5.2 2.8 2.2C6.3 -.6 11.5 .4 14 4.6C16.5 .4 21.7 -.6 25.2 2.2C28.6 5.2 28.4 11 24.2 15.8C21 19.6 16.5 22.6 14 25.4Z"
        fill={`url(#${id})`}
      />
    </svg>
  )
}

function ReadTicks() {
  return (
    <svg
      className="mb-[3px] h-5 w-[30px]"
      viewBox="0 0 30 20"
      fill="none"
      stroke="#53bdeb"
      strokeWidth="2.6"
      strokeLinecap="round"
      strokeLinejoin="round"
      role="img"
      aria-label="Read"
    >
      <path d="M2 12.3L7.3 17.5L19.5 2.3" />
      <path d="M13.2 16L14.8 17.5L28 2.3" />
    </svg>
  )
}

function Tail({ mine }: { mine: boolean }) {
  return mine ? (
    <svg className="absolute top-0 -right-[13px] h-5 w-[14px]" viewBox="0 0 14 20" aria-hidden="true">
      <path d="M0 0H12Q15 1.5 13.2 4L3.5 13.5Q1 16 1 20H0Z" fill="#144d37" />
    </svg>
  ) : (
    <svg className="absolute top-0 -left-[13px] h-5 w-[14px]" viewBox="0 0 14 20" aria-hidden="true">
      <path d="M14 0H2Q-1 1.5 .8 4L10.500 13.5Q13 16 13 20H14Z" fill="#1f272a" />
    </svg>
  )
}

function Bubble({ message, mine, first }: { message: Message; mine: boolean; first: boolean }) {
  if (mine) {
    return (
      <li
        className={`relative flex items-end gap-[15px] self-end rounded-[20px] bg-[#144d37] pt-[9px] pr-4 pb-2 pl-[18px] ${first ? 'rounded-tr-none' : ''}`}
      >
        {first && <Tail mine />}
        <p className="mb-1.5 text-[29px] leading-9 text-[#f4f8f6]">{message.text}</p>
        <div className="flex items-end gap-1.5">
          <time className="text-[22px] leading-6 text-[#8fac9f]">{message.time}</time>
          <ReadTicks />
        </div>
      </li>
    )
  }
  return (
    <li
      className={`relative self-start rounded-[20px] bg-[#1f272a] pr-[15px] pb-1.5 pl-[18px] ${first ? 'rounded-tl-none pt-2' : 'pt-1.5'}`}
    >
      {first && <Tail mine={false} />}
      {first && (
        <div className="mb-[5px] flex h-8 items-center gap-2">
          <span className="text-[25px] leading-8 font-medium text-[#53bdeb]">Merve</span>
          <WhiteHeart />
        </div>
      )}
      <div className="flex items-end justify-between gap-[26px]">
        <p className="mb-2 text-[29px] leading-9 text-[#f4f6f6]">{message.text}</p>
        <time className="text-[22px] leading-6 text-[#92989b]">{message.time}</time>
      </div>
    </li>
  )
}

export default function App() {
  return (
    <main className="relative min-h-screen overflow-hidden bg-[#0b1014] font-['Roboto',sans-serif]">
      <Wallpaper />
      <div className="relative flex flex-col gap-[19px] pt-2 pr-[22px] pb-[17px] pl-[9px]">
        {groups.map((group, i) => (
          <ul key={i} className="flex flex-col gap-1">
            {group.messages.map((message, j) => (
              <Bubble key={message.text} message={message} mine={group.from === 'me'} first={j === 0} />
            ))}
          </ul>
        ))}
      </div>
      <button
        type="button"
        aria-label="Scroll to bottom"
        className="absolute right-[22px] bottom-[22px] flex size-[58px] items-center justify-center rounded-full bg-[#243037]"
      >
        <svg
          className="size-6"
          viewBox="0 0 24 24"
          fill="none"
          stroke="#9ba3a8"
          strokeWidth="3.4"
          strokeLinecap="round"
          strokeLinejoin="round"
          aria-hidden="true"
        >
          <path d="M3 3.5L12 12L21 3.5M3 14L12 22.3L21 14" />
        </svg>
      </button>
    </main>
  )
}
